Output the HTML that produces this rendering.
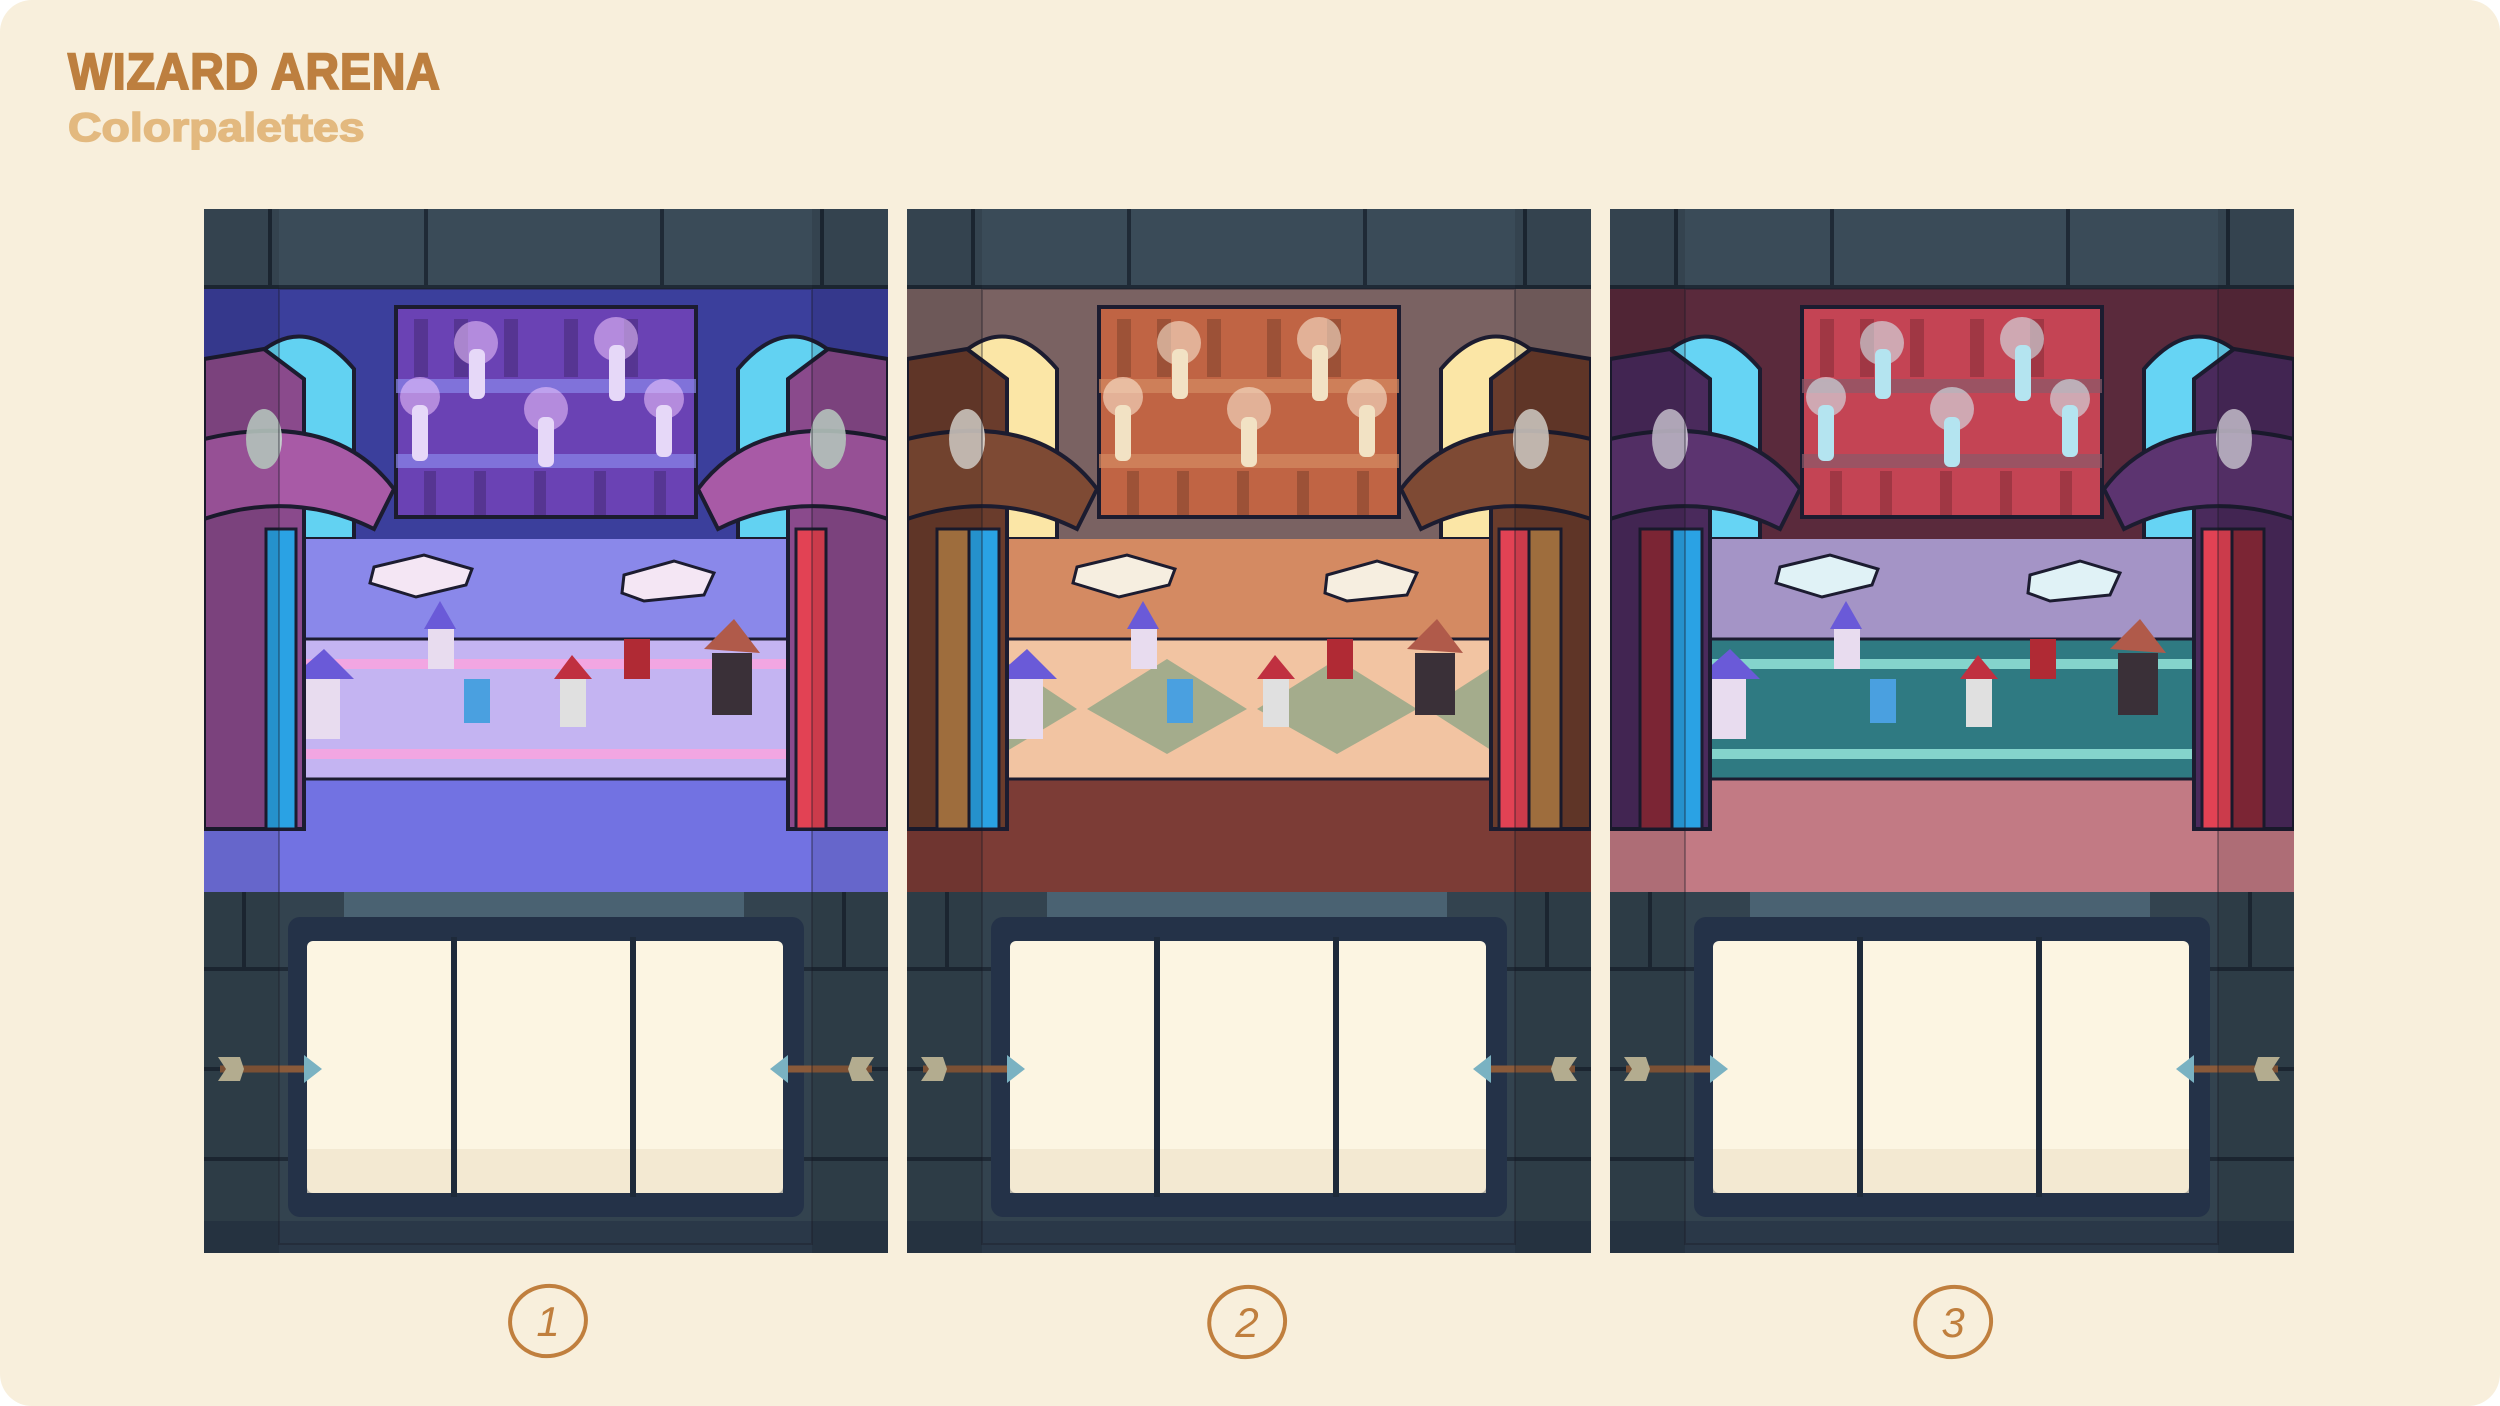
<!DOCTYPE html>
<html><head><meta charset="utf-8"><style>
html,body{margin:0;padding:0;background:#fff;}
.page{position:relative;width:2500px;height:1406px;background:#f8efdc;border-radius:32px;overflow:hidden;font-family:"Liberation Sans",sans-serif;}
.t1{position:absolute;left:68px;top:46px;font-size:51px;line-height:1;font-weight:bold;color:#bd7f3f;transform:scaleX(0.91);transform-origin:left top;letter-spacing:1px;white-space:nowrap;-webkit-text-stroke:2px #bd7f3f;}
.t2{position:absolute;left:68px;top:108px;font-size:40px;line-height:1;font-weight:bold;color:#e3b97f;transform:scaleX(1.16);transform-origin:left top;white-space:nowrap;-webkit-text-stroke:1.5px #e3b97f;}
.panel{position:absolute;top:209px;width:684px;height:1044px;}
.p1{left:204px;--wall:#3b3f9c;--win:#62d2f2;--shelf:#6a42b4;--f1:#8a88ea;--carpet:#c4b4f2;--stripe:#f2a6e2;--f2:#7272e2;--tower:#8a4a8c;--tower2:#a85aa6;--candle:#e6d8f8;--glow:#f0c8ff;}
.p2{left:907px;--wall:#7a6262;--win:#fbe6a6;--shelf:#c06444;--f1:#d48a62;--carpet:#f2c4a2;--stripe:#a4ac8c;--f2:#7c3c36;--tower:#6a3c2c;--tower2:#7e4a34;--candle:#f2e2c4;--glow:#fff0dc;}
.p3{left:1610px;--wall:#5a2a3c;--win:#66d4f4;--shelf:#c44454;--f1:#a494c6;--carpet:#2f7a82;--stripe:#84d4cc;--f2:#c27a84;--tower:#4a2a5c;--tower2:#5c3470;--candle:#b4e4f0;--glow:#d8fbff;}
.num{position:absolute;top:1278px;width:90px;height:86px;}
</style></head><body><div class="page">
<div class="t1">WIZARD ARENA</div>
<div class="t2">Colorpalettes</div>

<svg class="panel p1" viewBox="0 0 684 1044" xmlns="http://www.w3.org/2000/svg">
<rect width="684" height="1044" fill="#2f3d4b"/>
<rect x="0" y="0" width="684" height="80" fill="#3a4b58"/>
<g stroke="#1f2a36" stroke-width="4"><line x1="66" y1="0" x2="66" y2="78"/><line x1="222" y1="0" x2="222" y2="78"/><line x1="458" y1="0" x2="458" y2="78"/><line x1="618" y1="0" x2="618" y2="78"/><line x1="0" y1="78" x2="684" y2="78"/></g>
<rect x="0" y="80" width="684" height="270" fill="var(--wall)"/>
<path d="M40 330 L40 160 Q95 95 150 160 L150 330Z" fill="var(--win)" stroke="#1c1c30" stroke-width="4"/>
<path d="M534 330 L534 160 Q589 95 644 160 L644 330Z" fill="var(--win)" stroke="#1c1c30" stroke-width="4"/>
<rect x="192" y="98" width="300" height="210" fill="var(--shelf)" stroke="#1c1c30" stroke-width="4"/>
<rect x="192" y="170" width="300" height="14" fill="var(--f1)" opacity=".7"/>
<rect x="192" y="245" width="300" height="14" fill="var(--f1)" opacity=".7"/>
<g fill="#000" opacity=".18"><rect x="210" y="110" width="14" height="58"/><rect x="250" y="110" width="14" height="58"/><rect x="300" y="110" width="14" height="58"/><rect x="360" y="110" width="14" height="58"/><rect x="420" y="110" width="14" height="58"/><rect x="220" y="262" width="12" height="44"/><rect x="270" y="262" width="12" height="44"/><rect x="330" y="262" width="12" height="44"/><rect x="390" y="262" width="12" height="44"/><rect x="450" y="262" width="12" height="44"/></g>
<g fill="var(--glow)" opacity=".55"><circle cx="272" cy="134" r="22"/><circle cx="412" cy="130" r="22"/><circle cx="216" cy="188" r="20"/><circle cx="342" cy="200" r="22"/><circle cx="460" cy="190" r="20"/><circle cx="114" cy="580" r="22"/></g>
<g fill="var(--candle)"><rect x="265" y="140" width="16" height="50" rx="6"/><rect x="405" y="136" width="16" height="56" rx="6"/><rect x="208" y="196" width="16" height="56" rx="6"/><rect x="334" y="208" width="16" height="50" rx="6"/><rect x="452" y="196" width="16" height="52" rx="6"/><rect x="104" y="590" width="20" height="50" rx="6"/></g>
<rect x="0" y="330" width="684" height="110" fill="var(--f1)"/>
<path d="M170 358 L220 346 L268 360 L262 376 L212 388 L166 374Z" fill="#f4e6f4" stroke="#1c1c30" stroke-width="3"/>
<path d="M420 366 L470 352 L510 364 L500 386 L440 392 L418 384Z" fill="#f4e6f4" stroke="#1c1c30" stroke-width="3"/>
<rect x="0" y="440" width="684" height="245" fill="var(--f2)"/>
<path d="M80 430 L600 430 L590 570 L95 570Z" fill="var(--carpet)" stroke="#1c1c30" stroke-width="3"/>
<rect x="90" y="450" width="500" height="10" fill="var(--stripe)"/>
<rect x="90" y="540" width="500" height="10" fill="var(--stripe)"/>
<g><path d="M86 470 L120 440 L150 470Z" fill="#6a5ad8"/><rect x="100" y="470" width="36" height="60" fill="#e8dcef"/>
<path d="M220 420 L236 392 L252 420Z" fill="#6a5ad8"/><rect x="224" y="420" width="26" height="40" fill="#e8dcef"/>
<rect x="260" y="470" width="26" height="44" fill="#4aa0e0"/>
<path d="M350 470 L368 446 L388 470Z" fill="#c03040"/><rect x="356" y="470" width="26" height="48" fill="#e0e0e0"/>
<rect x="420" y="430" width="26" height="40" fill="#b02a34"/>
<path d="M500 440 L530 410 L556 444Z" fill="#b05a4a"/><rect x="508" y="444" width="40" height="62" fill="#3a3038"/></g>
<path d="M0 150 L60 140 L100 170 L100 620 L0 620Z" fill="var(--tower)" stroke="#1c1c30" stroke-width="4"/>
<path d="M0 230 Q130 200 190 280 L170 320 Q90 280 0 310Z" fill="var(--tower2)" stroke="#1c1c30" stroke-width="4"/>
<rect x="62" y="320" width="30" height="300" fill="#2aa2e4" stroke="#1c1c30" stroke-width="3"/>
<path d="M684 150 L624 140 L584 170 L584 620 L684 620Z" fill="var(--tower)" stroke="#1c1c30" stroke-width="4"/>
<path d="M684 230 Q554 200 494 280 L514 320 Q594 280 684 310Z" fill="var(--tower2)" stroke="#1c1c30" stroke-width="4"/>
<rect x="592" y="320" width="30" height="300" fill="#e24254" stroke="#1c1c30" stroke-width="3"/>
<ellipse cx="60" cy="230" rx="18" ry="30" fill="#c8d8d0" opacity=".9"/>
<ellipse cx="624" cy="230" rx="18" ry="30" fill="#c8d8d0" opacity=".9"/>
<rect x="0" y="683" width="684" height="361" fill="#33434f"/>
<rect x="140" y="683" width="400" height="30" fill="#4a6272"/>
<g stroke="#1f2a36" stroke-width="4"><line x1="0" y1="760" x2="90" y2="760"/><line x1="594" y1="760" x2="684" y2="760"/><line x1="0" y1="860" x2="90" y2="860"/><line x1="594" y1="860" x2="684" y2="860"/><line x1="0" y1="950" x2="90" y2="950"/><line x1="594" y1="950" x2="684" y2="950"/><line x1="40" y1="683" x2="40" y2="760"/><line x1="640" y1="683" x2="640" y2="760"/></g>
<rect x="84" y="708" width="516" height="300" rx="12" fill="#243248"/>
<rect x="103" y="732" width="476" height="252" rx="6" fill="#fcf5e2"/>
<rect x="103" y="940" width="476" height="44" fill="#efe4cc" opacity=".7"/>
<rect x="247" y="728" width="6" height="260" fill="#1e2a3a"/>
<rect x="426" y="728" width="6" height="260" fill="#1e2a3a"/>
<rect x="0" y="1012" width="684" height="32" fill="#2a3848"/>
<line x1="16" y1="860" x2="100" y2="860" stroke="#8a5a3a" stroke-width="7"/>
<path d="M100 846 L118 860 L100 874Z" fill="#7ab2c2"/><path d="M14 848 L36 848 L40 860 L36 872 L14 872 L22 860Z" fill="#c8c0a0"/>
<line x1="584" y1="860" x2="668" y2="860" stroke="#8a5a3a" stroke-width="7"/>
<path d="M584 846 L566 860 L584 874Z" fill="#7ab2c2"/><path d="M670 848 L648 848 L644 860 L648 872 L670 872 L662 860Z" fill="#c8c0a0"/>
<rect x="0" y="0" width="75" height="1044" fill="#000" opacity=".1"/>
<rect x="608" y="0" width="76" height="1044" fill="#000" opacity=".1"/>
<rect x="75" y="80" width="533" height="955" fill="none" stroke="#1a1a24" stroke-opacity=".35" stroke-width="2"/>
</svg>

<svg class="panel p2" viewBox="0 0 684 1044" xmlns="http://www.w3.org/2000/svg">
<rect width="684" height="1044" fill="#2f3d4b"/>
<rect x="0" y="0" width="684" height="80" fill="#3a4b58"/>
<g stroke="#1f2a36" stroke-width="4"><line x1="66" y1="0" x2="66" y2="78"/><line x1="222" y1="0" x2="222" y2="78"/><line x1="458" y1="0" x2="458" y2="78"/><line x1="618" y1="0" x2="618" y2="78"/><line x1="0" y1="78" x2="684" y2="78"/></g>
<rect x="0" y="80" width="684" height="270" fill="var(--wall)"/>
<path d="M40 330 L40 160 Q95 95 150 160 L150 330Z" fill="var(--win)" stroke="#1c1c30" stroke-width="4"/>
<path d="M534 330 L534 160 Q589 95 644 160 L644 330Z" fill="var(--win)" stroke="#1c1c30" stroke-width="4"/>
<rect x="192" y="98" width="300" height="210" fill="var(--shelf)" stroke="#1c1c30" stroke-width="4"/>
<rect x="192" y="170" width="300" height="14" fill="var(--f1)" opacity=".7"/>
<rect x="192" y="245" width="300" height="14" fill="var(--f1)" opacity=".7"/>
<g fill="#000" opacity=".18"><rect x="210" y="110" width="14" height="58"/><rect x="250" y="110" width="14" height="58"/><rect x="300" y="110" width="14" height="58"/><rect x="360" y="110" width="14" height="58"/><rect x="420" y="110" width="14" height="58"/><rect x="220" y="262" width="12" height="44"/><rect x="270" y="262" width="12" height="44"/><rect x="330" y="262" width="12" height="44"/><rect x="390" y="262" width="12" height="44"/><rect x="450" y="262" width="12" height="44"/></g>
<g fill="var(--glow)" opacity=".55"><circle cx="272" cy="134" r="22"/><circle cx="412" cy="130" r="22"/><circle cx="216" cy="188" r="20"/><circle cx="342" cy="200" r="22"/><circle cx="460" cy="190" r="20"/><circle cx="114" cy="580" r="22"/></g>
<g fill="var(--candle)"><rect x="265" y="140" width="16" height="50" rx="6"/><rect x="405" y="136" width="16" height="56" rx="6"/><rect x="208" y="196" width="16" height="56" rx="6"/><rect x="334" y="208" width="16" height="50" rx="6"/><rect x="452" y="196" width="16" height="52" rx="6"/><rect x="104" y="590" width="20" height="50" rx="6"/></g>
<rect x="0" y="330" width="684" height="110" fill="var(--f1)"/>
<path d="M170 358 L220 346 L268 360 L262 376 L212 388 L166 374Z" fill="#f6eee0" stroke="#1c1c30" stroke-width="3"/>
<path d="M420 366 L470 352 L510 364 L500 386 L440 392 L418 384Z" fill="#f6eee0" stroke="#1c1c30" stroke-width="3"/>
<rect x="0" y="440" width="684" height="245" fill="var(--f2)"/>
<path d="M80 430 L600 430 L590 570 L95 570Z" fill="var(--carpet)" stroke="#1c1c30" stroke-width="3"/>
<path d="M95 450 L170 500 L95 545Z M180 500 L260 450 L340 500 L260 545Z M350 500 L430 450 L510 500 L430 545Z M520 500 L590 455 L590 545Z" fill="var(--stripe)"/>
<g><path d="M86 470 L120 440 L150 470Z" fill="#6a5ad8"/><rect x="100" y="470" width="36" height="60" fill="#e8dcef"/>
<path d="M220 420 L236 392 L252 420Z" fill="#6a5ad8"/><rect x="224" y="420" width="26" height="40" fill="#e8dcef"/>
<rect x="260" y="470" width="26" height="44" fill="#4aa0e0"/>
<path d="M350 470 L368 446 L388 470Z" fill="#c03040"/><rect x="356" y="470" width="26" height="48" fill="#e0e0e0"/>
<rect x="420" y="430" width="26" height="40" fill="#b02a34"/>
<path d="M500 440 L530 410 L556 444Z" fill="#b05a4a"/><rect x="508" y="444" width="40" height="62" fill="#3a3038"/></g>
<path d="M0 150 L60 140 L100 170 L100 620 L0 620Z" fill="var(--tower)" stroke="#1c1c30" stroke-width="4"/>
<path d="M0 230 Q130 200 190 280 L170 320 Q90 280 0 310Z" fill="var(--tower2)" stroke="#1c1c30" stroke-width="4"/>
<rect x="30" y="320" width="32" height="300" fill="#b07a44" stroke="#1c1c30" stroke-width="3"/>
<rect x="62" y="320" width="30" height="300" fill="#2aa2e4" stroke="#1c1c30" stroke-width="3"/>
<path d="M684 150 L624 140 L584 170 L584 620 L684 620Z" fill="var(--tower)" stroke="#1c1c30" stroke-width="4"/>
<path d="M684 230 Q554 200 494 280 L514 320 Q594 280 684 310Z" fill="var(--tower2)" stroke="#1c1c30" stroke-width="4"/>
<rect x="622" y="320" width="32" height="300" fill="#b07a44" stroke="#1c1c30" stroke-width="3"/>
<rect x="592" y="320" width="30" height="300" fill="#e24254" stroke="#1c1c30" stroke-width="3"/>
<ellipse cx="60" cy="230" rx="18" ry="30" fill="#e0d8d0" opacity=".9"/>
<ellipse cx="624" cy="230" rx="18" ry="30" fill="#e0d8d0" opacity=".9"/>
<rect x="0" y="683" width="684" height="361" fill="#33434f"/>
<rect x="140" y="683" width="400" height="30" fill="#4a6272"/>
<g stroke="#1f2a36" stroke-width="4"><line x1="0" y1="760" x2="90" y2="760"/><line x1="594" y1="760" x2="684" y2="760"/><line x1="0" y1="860" x2="90" y2="860"/><line x1="594" y1="860" x2="684" y2="860"/><line x1="0" y1="950" x2="90" y2="950"/><line x1="594" y1="950" x2="684" y2="950"/><line x1="40" y1="683" x2="40" y2="760"/><line x1="640" y1="683" x2="640" y2="760"/></g>
<rect x="84" y="708" width="516" height="300" rx="12" fill="#243248"/>
<rect x="103" y="732" width="476" height="252" rx="6" fill="#fcf5e2"/>
<rect x="103" y="940" width="476" height="44" fill="#efe4cc" opacity=".7"/>
<rect x="247" y="728" width="6" height="260" fill="#1e2a3a"/>
<rect x="426" y="728" width="6" height="260" fill="#1e2a3a"/>
<rect x="0" y="1012" width="684" height="32" fill="#2a3848"/>
<line x1="16" y1="860" x2="100" y2="860" stroke="#8a5a3a" stroke-width="7"/>
<path d="M100 846 L118 860 L100 874Z" fill="#7ab2c2"/><path d="M14 848 L36 848 L40 860 L36 872 L14 872 L22 860Z" fill="#c8c0a0"/>
<line x1="584" y1="860" x2="668" y2="860" stroke="#8a5a3a" stroke-width="7"/>
<path d="M584 846 L566 860 L584 874Z" fill="#7ab2c2"/><path d="M670 848 L648 848 L644 860 L648 872 L670 872 L662 860Z" fill="#c8c0a0"/>
<rect x="0" y="0" width="75" height="1044" fill="#000" opacity=".1"/>
<rect x="608" y="0" width="76" height="1044" fill="#000" opacity=".1"/>
<rect x="75" y="80" width="533" height="955" fill="none" stroke="#1a1a24" stroke-opacity=".35" stroke-width="2"/>
</svg>

<svg class="panel p3" viewBox="0 0 684 1044" xmlns="http://www.w3.org/2000/svg">
<rect width="684" height="1044" fill="#2f3d4b"/>
<rect x="0" y="0" width="684" height="80" fill="#3a4b58"/>
<g stroke="#1f2a36" stroke-width="4"><line x1="66" y1="0" x2="66" y2="78"/><line x1="222" y1="0" x2="222" y2="78"/><line x1="458" y1="0" x2="458" y2="78"/><line x1="618" y1="0" x2="618" y2="78"/><line x1="0" y1="78" x2="684" y2="78"/></g>
<rect x="0" y="80" width="684" height="270" fill="var(--wall)"/>
<path d="M40 330 L40 160 Q95 95 150 160 L150 330Z" fill="var(--win)" stroke="#1c1c30" stroke-width="4"/>
<path d="M534 330 L534 160 Q589 95 644 160 L644 330Z" fill="var(--win)" stroke="#1c1c30" stroke-width="4"/>
<rect x="192" y="98" width="300" height="210" fill="var(--shelf)" stroke="#1c1c30" stroke-width="4"/>
<rect x="192" y="170" width="300" height="14" fill="#8a5a6a" opacity=".7"/>
<rect x="192" y="245" width="300" height="14" fill="#8a5a6a" opacity=".7"/>
<g fill="#000" opacity=".18"><rect x="210" y="110" width="14" height="58"/><rect x="250" y="110" width="14" height="58"/><rect x="300" y="110" width="14" height="58"/><rect x="360" y="110" width="14" height="58"/><rect x="420" y="110" width="14" height="58"/><rect x="220" y="262" width="12" height="44"/><rect x="270" y="262" width="12" height="44"/><rect x="330" y="262" width="12" height="44"/><rect x="390" y="262" width="12" height="44"/><rect x="450" y="262" width="12" height="44"/></g>
<g fill="var(--glow)" opacity=".55"><circle cx="272" cy="134" r="22"/><circle cx="412" cy="130" r="22"/><circle cx="216" cy="188" r="20"/><circle cx="342" cy="200" r="22"/><circle cx="460" cy="190" r="20"/><circle cx="114" cy="580" r="22"/></g>
<g fill="var(--candle)"><rect x="265" y="140" width="16" height="50" rx="6"/><rect x="405" y="136" width="16" height="56" rx="6"/><rect x="208" y="196" width="16" height="56" rx="6"/><rect x="334" y="208" width="16" height="50" rx="6"/><rect x="452" y="196" width="16" height="52" rx="6"/><rect x="104" y="590" width="20" height="50" rx="6"/></g>
<rect x="0" y="330" width="684" height="110" fill="var(--f1)"/>
<path d="M170 358 L220 346 L268 360 L262 376 L212 388 L166 374Z" fill="#e0f2f6" stroke="#1c1c30" stroke-width="3"/>
<path d="M420 366 L470 352 L510 364 L500 386 L440 392 L418 384Z" fill="#e0f2f6" stroke="#1c1c30" stroke-width="3"/>
<rect x="0" y="440" width="684" height="245" fill="var(--f2)"/>
<path d="M80 430 L600 430 L590 570 L95 570Z" fill="var(--carpet)" stroke="#1c1c30" stroke-width="3"/>
<rect x="90" y="450" width="500" height="10" fill="var(--stripe)"/>
<rect x="90" y="540" width="500" height="10" fill="var(--stripe)"/>
<g><path d="M86 470 L120 440 L150 470Z" fill="#6a5ad8"/><rect x="100" y="470" width="36" height="60" fill="#e8dcef"/>
<path d="M220 420 L236 392 L252 420Z" fill="#6a5ad8"/><rect x="224" y="420" width="26" height="40" fill="#e8dcef"/>
<rect x="260" y="470" width="26" height="44" fill="#4aa0e0"/>
<path d="M350 470 L368 446 L388 470Z" fill="#c03040"/><rect x="356" y="470" width="26" height="48" fill="#e0e0e0"/>
<rect x="420" y="430" width="26" height="40" fill="#b02a34"/>
<path d="M500 440 L530 410 L556 444Z" fill="#b05a4a"/><rect x="508" y="444" width="40" height="62" fill="#3a3038"/></g>
<path d="M0 150 L60 140 L100 170 L100 620 L0 620Z" fill="var(--tower)" stroke="#1c1c30" stroke-width="4"/>
<path d="M0 230 Q130 200 190 280 L170 320 Q90 280 0 310Z" fill="var(--tower2)" stroke="#1c1c30" stroke-width="4"/>
<rect x="30" y="320" width="32" height="300" fill="#8a2a3a" stroke="#1c1c30" stroke-width="3"/>
<rect x="62" y="320" width="30" height="300" fill="#2aa2e4" stroke="#1c1c30" stroke-width="3"/>
<path d="M684 150 L624 140 L584 170 L584 620 L684 620Z" fill="var(--tower)" stroke="#1c1c30" stroke-width="4"/>
<path d="M684 230 Q554 200 494 280 L514 320 Q594 280 684 310Z" fill="var(--tower2)" stroke="#1c1c30" stroke-width="4"/>
<rect x="622" y="320" width="32" height="300" fill="#8a2a3a" stroke="#1c1c30" stroke-width="3"/>
<rect x="592" y="320" width="30" height="300" fill="#e24254" stroke="#1c1c30" stroke-width="3"/>
<ellipse cx="60" cy="230" rx="18" ry="30" fill="#d0c8d8" opacity=".9"/>
<ellipse cx="624" cy="230" rx="18" ry="30" fill="#d0c8d8" opacity=".9"/>
<rect x="0" y="683" width="684" height="361" fill="#33434f"/>
<rect x="140" y="683" width="400" height="30" fill="#4a6272"/>
<g stroke="#1f2a36" stroke-width="4"><line x1="0" y1="760" x2="90" y2="760"/><line x1="594" y1="760" x2="684" y2="760"/><line x1="0" y1="860" x2="90" y2="860"/><line x1="594" y1="860" x2="684" y2="860"/><line x1="0" y1="950" x2="90" y2="950"/><line x1="594" y1="950" x2="684" y2="950"/><line x1="40" y1="683" x2="40" y2="760"/><line x1="640" y1="683" x2="640" y2="760"/></g>
<rect x="84" y="708" width="516" height="300" rx="12" fill="#243248"/>
<rect x="103" y="732" width="476" height="252" rx="6" fill="#fcf5e2"/>
<rect x="103" y="940" width="476" height="44" fill="#efe4cc" opacity=".7"/>
<rect x="247" y="728" width="6" height="260" fill="#1e2a3a"/>
<rect x="426" y="728" width="6" height="260" fill="#1e2a3a"/>
<rect x="0" y="1012" width="684" height="32" fill="#2a3848"/>
<line x1="16" y1="860" x2="100" y2="860" stroke="#8a5a3a" stroke-width="7"/>
<path d="M100 846 L118 860 L100 874Z" fill="#7ab2c2"/><path d="M14 848 L36 848 L40 860 L36 872 L14 872 L22 860Z" fill="#c8c0a0"/>
<line x1="584" y1="860" x2="668" y2="860" stroke="#8a5a3a" stroke-width="7"/>
<path d="M584 846 L566 860 L584 874Z" fill="#7ab2c2"/><path d="M670 848 L648 848 L644 860 L648 872 L670 872 L662 860Z" fill="#c8c0a0"/>
<rect x="0" y="0" width="75" height="1044" fill="#000" opacity=".1"/>
<rect x="608" y="0" width="76" height="1044" fill="#000" opacity=".1"/>
<rect x="75" y="80" width="533" height="955" fill="none" stroke="#1a1a24" stroke-opacity=".35" stroke-width="2"/>
</svg>

<svg class="num" style="left:503px" viewBox="0 0 90 86"><ellipse cx="45" cy="43" rx="38" ry="35" fill="none" stroke="#c07f3e" stroke-width="4" transform="rotate(-10 45 43)"/><text x="45" y="58" text-anchor="middle" font-family="Liberation Sans,sans-serif" font-style="italic" font-size="42" fill="#c07f3e">1</text></svg>
<svg class="num" style="left:1202px" viewBox="0 0 90 86"><ellipse cx="45" cy="44" rx="38" ry="35" fill="none" stroke="#c07f3e" stroke-width="4" transform="rotate(-10 45 43)"/><text x="45" y="59" text-anchor="middle" font-family="Liberation Sans,sans-serif" font-style="italic" font-size="42" fill="#c07f3e">2</text></svg>
<svg class="num" style="left:1908px" viewBox="0 0 90 86"><ellipse cx="45" cy="44" rx="38" ry="35" fill="none" stroke="#c07f3e" stroke-width="4" transform="rotate(-10 45 43)"/><text x="45" y="59" text-anchor="middle" font-family="Liberation Sans,sans-serif" font-style="italic" font-size="42" fill="#c07f3e">3</text></svg>
</div></body></html>
